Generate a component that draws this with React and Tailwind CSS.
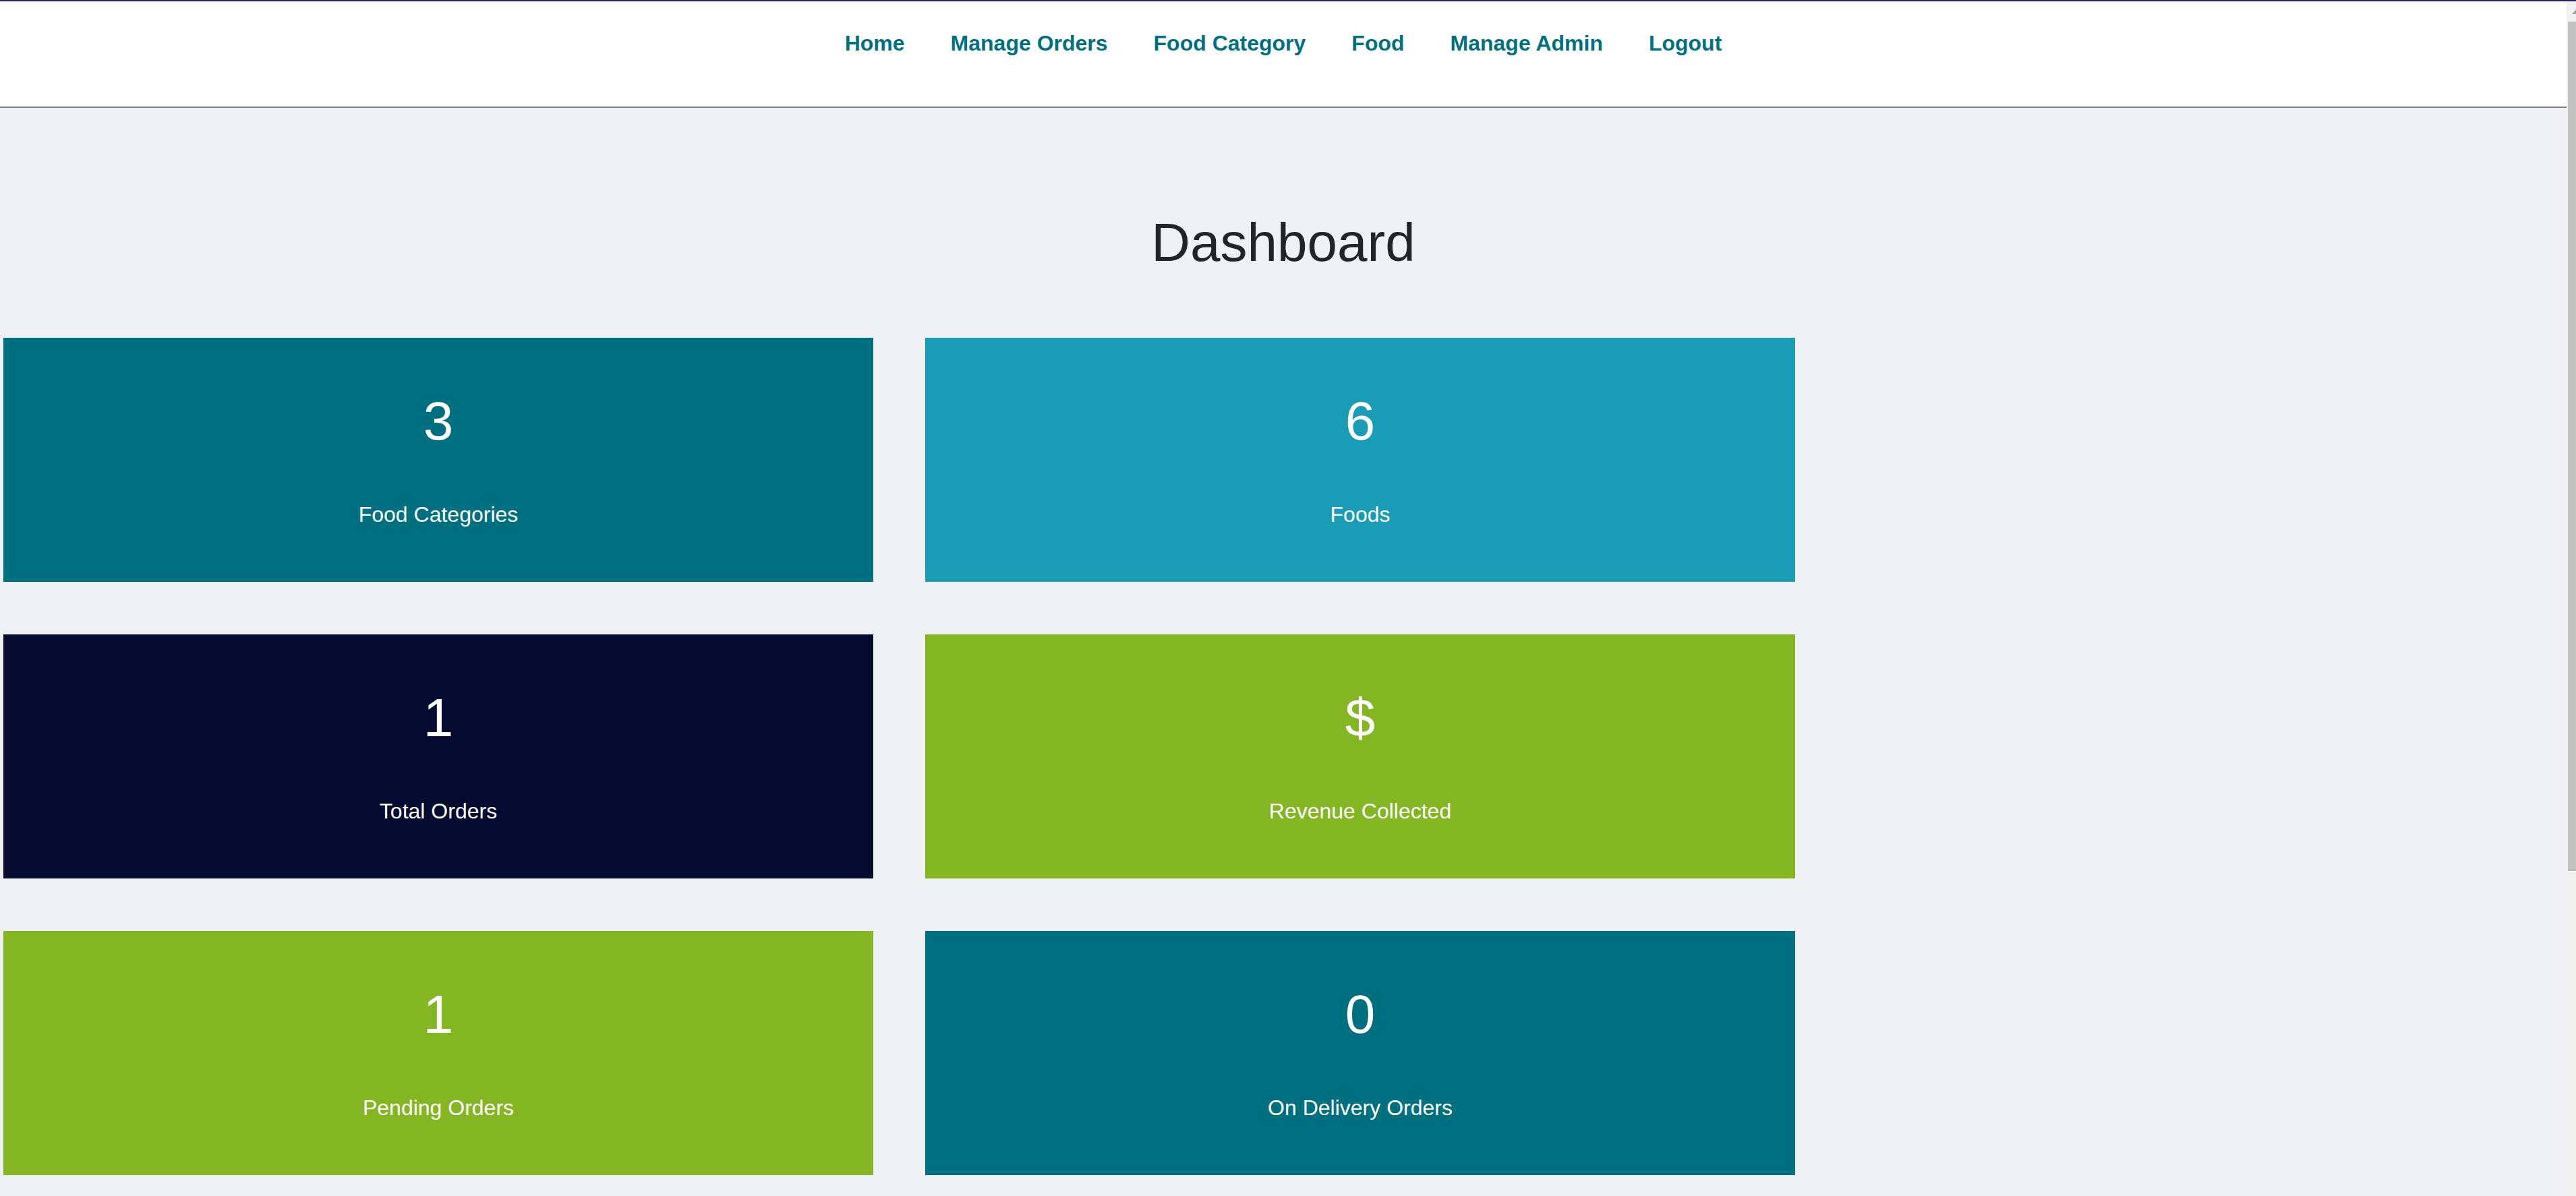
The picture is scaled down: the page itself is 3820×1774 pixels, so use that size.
const links = ["Home", "Manage Orders", "Food Category", "Food", "Manage Admin", "Logout"];

const stats = [
  { value: "3", label: "Food Categories", color: "bg-[#006f7f]" },
  { value: "6", label: "Foods", color: "bg-[#1a9bb6]" },
  { value: "1", label: "Total Orders", color: "bg-[#040a30]" },
  { value: "$", label: "Revenue Collected", color: "bg-[#84b623]" },
  { value: "1", label: "Pending Orders", color: "bg-[#84b623]" },
  { value: "0", label: "On Delivery Orders", color: "bg-[#006f7f]" },
];

function StatCard({ value, label, color }) {
  return (
    <div className={`${color} h-[362px] flex flex-col items-center text-white`}>
      <h1 className="mt-[76px] text-[80px] leading-[96px]">{value}</h1>
      <p className="mt-[66px] text-[32px] leading-[48px]">{label}</p>
    </div>
  );
}

function Scrollbar() {
  return (
    <div className="w-[14px] shrink-0 bg-[#f1f1f1] flex flex-col">
      <div className="h-[30px] flex justify-end pt-[12px]">
        <svg width="6" height="7" viewBox="0 0 6 7">
          <polygon points="6,0 0,7 6,7" fill="#a3a3a3" />
        </svg>
      </div>
      <div className="ml-[2px] h-[1260px] bg-[#c1c1c1]" />
    </div>
  );
}

export default function App() {
  return (
    <div
      className="h-screen overflow-hidden flex bg-[#f0f1f5] border-t-2 border-[#2e1f5e] text-[#212529]"
      style={{ fontFamily: '"Liberation Sans", Arial, sans-serif' }}
    >
      <div className="flex-1 min-w-0">
        <nav className="bg-white h-[158px] border-b-2 border-[#808080] pt-[38px]">
          <ul className="flex justify-center gap-[68px]">
            {links.map((l) => (
              <li key={l}>
                <a href="#" className="text-[32px] leading-[48px] font-bold text-[#00707f]">
                  {l}
                </a>
              </li>
            ))}
          </ul>
        </nav>

        <h1 className="mt-[152px] text-center text-[80px] leading-[96px]">Dashboard</h1>

        <div className="mt-[93px] pl-[5px] grid grid-cols-[1290px_1290px] gap-x-[77px] gap-y-[78px]">
          {stats.map((s) => (
            <StatCard key={s.label} {...s} />
          ))}
        </div>
      </div>
      <Scrollbar />
    </div>
  );
}
